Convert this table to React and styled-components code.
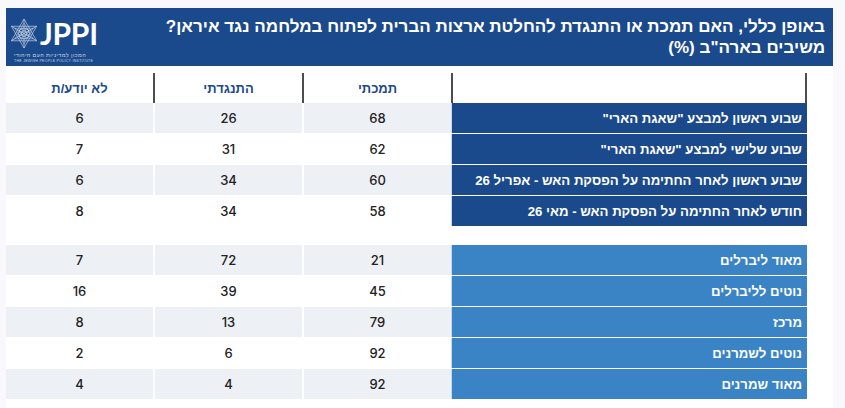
import React from 'react';
import styled, { createGlobalStyle } from 'styled-components';

const GlobalStyle = createGlobalStyle`
  body {
    margin: 0;
    background: #f8f8fd;
    font-family: 'Liberation Sans', Arial, sans-serif;
  }
`;

const Card = styled.div`
  width: 827px;
  height: 400px;
  margin: 8px 0 0 6px;
  background: #fff;
`;

const Header = styled.header`
  display: flex;
  justify-content: space-between;
  align-items: flex-start;
  height: 58px;
  padding: 0 8px 0 4px;
  box-sizing: border-box;
  background: #1b4a8c;
`;

const Logo = styled.div`
  display: flex;
  flex-direction: column;
  align-items: flex-start;
  padding-top: 10px;
  color: #fff;
`;

const LogoTop = styled.div`
  display: flex;
  align-items: center;
  gap: 2px;
  height: 30px;
`;

const LogoWord = styled.span`
  font-family: Lato, 'Open Sans', sans-serif;
  font-weight: 700;
  font-size: 30px;
  line-height: 30px;
  letter-spacing: -0.3px;
`;

const LogoSub = styled.div`
  margin-left: 4px;
  margin-top: ${(p) => p.gap}px;
  font-size: ${(p) => p.size}px;
  line-height: ${(p) => p.size + 0.5}px;
  letter-spacing: ${(p) => p.spacing || 0}px;
  color: #c9d4e6;
  white-space: nowrap;
`;

const Title = styled.h1`
  margin: 0;
  padding-top: 8px;
  font-size: 17px;
  font-weight: 700;
  line-height: 21px;
  color: #fff;
  text-align: right;
`;

const Table = styled.div`
  display: grid;
  grid-template-columns: 147px 149px 149px 356px;
  width: 801px;
`;

const HeadCell = styled.div`
  display: flex;
  align-items: center;
  justify-content: center;
  height: 30px;
  margin-top: 7px;
  border-left: ${(p) => (p.divider ? '2px solid #4d4d4d' : '0')};
  border-right: ${(p) => (p.last ? '2px solid #4d4d4d' : '0')};
  font-size: 13px;
  font-weight: 700;
  color: #1b4a8c;
`;

const Section = styled.div`
  display: grid;
  grid-column: 1 / -1;
  grid-template-columns: subgrid;
  row-gap: 1px;
  margin-top: ${(p) => p.top}px;
  background: #fff;
`;

const NumCell = styled.div`
  display: flex;
  align-items: center;
  justify-content: center;
  height: 30px;
  margin-left: ${(p) => (p.first ? '0' : '2px')};
  background: ${(p) => (p.shade ? '#edf0f5' : '#fff')};
  font-family: Inter, 'Open Sans', sans-serif;
  font-size: 13px;
  font-weight: 500;
  color: #222;
`;

const LabelCell = styled.div`
  display: flex;
  align-items: center;
  justify-content: flex-start;
  height: 30px;
  padding-right: 5px;
  border-left: 1px solid #c9d6e8;
  background: ${(p) => p.tone};
  font-size: 13.2px;
  font-weight: 700;
  color: #fff;
  direction: rtl;
`;

// line-drawn star of David used in the JPPI mark
const StarMark = () => (
  <svg width="28" height="31" viewBox="0 0 28 32" fill="none" stroke="#c9d4e6" strokeWidth="0.7">
    <polygon points="14,1 27,23.5 1,23.5" />
    <polygon points="14,31 27,8.5 1,8.5" />
    <polygon points="14,5 23.5,21.5 4.5,21.5" opacity="0.7" />
    <polygon points="14,27 23.5,10.5 4.5,10.5" opacity="0.7" />
    <circle cx="14" cy="16" r="5.5" />
    <circle cx="14" cy="16" r="3" />
    <circle cx="11" cy="13.5" r="2" />
    <circle cx="17" cy="13.5" r="2" />
    <circle cx="11" cy="18.5" r="2" />
    <circle cx="17" cy="18.5" r="2" />
    <line x1="1" y1="8.5" x2="27" y2="23.5" />
    <line x1="27" y1="8.5" x2="1" y2="23.5" />
    <line x1="14" y1="1" x2="14" y2="31" />
  </svg>
);

const wartime = [
  { label: 'שבוע ראשון למבצע "שאגת הארי"', v: [68, 26, 6] },
  { label: 'שבוע שלישי למבצע "שאגת הארי"', v: [62, 31, 7] },
  { label: 'שבוע ראשון לאחר החתימה על הפסקת האש - אפריל 26', v: [60, 34, 6] },
  { label: 'חודש לאחר החתימה על הפסקת האש - מאי 26', v: [58, 34, 8] },
];

const ideology = [
  { label: 'מאוד ליברלים', v: [21, 72, 7] },
  { label: 'נוטים לליברלים', v: [45, 39, 16] },
  { label: 'מרכז', v: [79, 13, 8] },
  { label: 'נוטים לשמרנים', v: [92, 6, 2] },
  { label: 'מאוד שמרנים', v: [92, 4, 4] },
];

const Rows = ({ rows, tone, top }) => (
  <Section top={top}>
    {rows.map((r, i) => (
      <React.Fragment key={r.label}>
        <NumCell first shade={i % 2 === 0}>{r.v[2]}</NumCell>
        <NumCell shade={i % 2 === 0}>{r.v[1]}</NumCell>
        <NumCell shade={i % 2 === 0}>{r.v[0]}</NumCell>
        <LabelCell tone={tone}>{r.label}</LabelCell>
      </React.Fragment>
    ))}
  </Section>
);

export default function App() {
  return (
    <>
      <GlobalStyle />
      <Card>
        <Header>
          <Logo>
            <LogoTop>
              <StarMark />
              <LogoWord>JPPI</LogoWord>
            </LogoTop>
            <LogoSub size={5.5} gap={4} dir="rtl" spacing={0.4}>המכון למדיניות העם היהודי</LogoSub>
            <LogoSub size={3.5} gap={1} spacing={0.3}>THE JEWISH PEOPLE POLICY INSTITUTE</LogoSub>
          </Logo>
          <Title dir="rtl">
            באופן כללי, האם תמכת או התנגדת להחלטת ארצות הברית לפתוח במלחמה נגד איראן?
            <br />
            משיבים בארה"ב (%)
          </Title>
        </Header>
        <Table>
          <HeadCell>לא יודע/ת</HeadCell>
          <HeadCell divider>התנגדתי</HeadCell>
          <HeadCell divider>תמכתי</HeadCell>
          <HeadCell divider last />
          <Rows rows={wartime} tone="#1b4a8c" top={0} />
          <Rows rows={ideology} tone="#3a84c6" top={19} />
        </Table>
      </Card>
    </>
  );
}
